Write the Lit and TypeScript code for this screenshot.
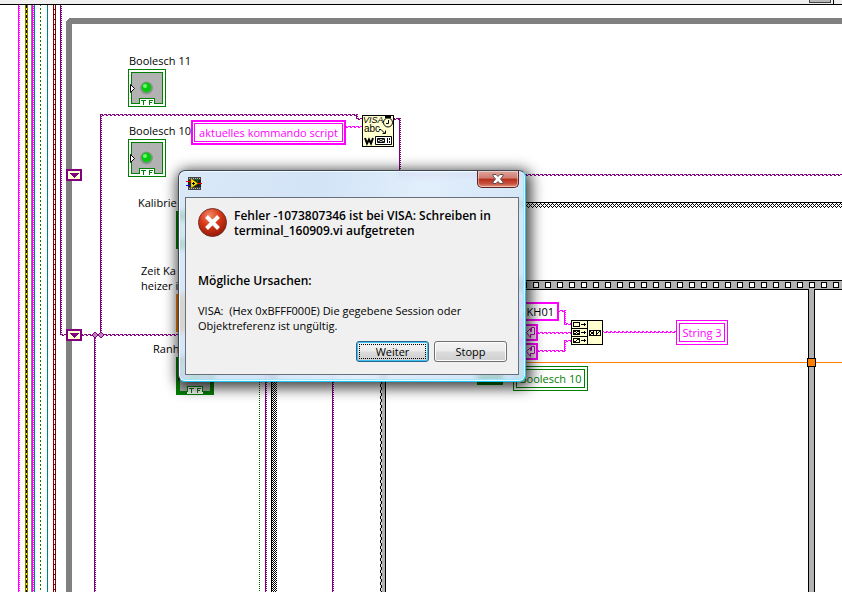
import { LitElement, html, css, svg, nothing } from "lit";
import { customElement, property } from "lit/decorators.js";

type Wire = [number | string, number | string, number | string, number | string];

/** Boolean indicator terminal with its LED and TF tag. */
@customElement("bool-terminal")
class BoolTerminal extends LitElement {
  @property({ type: Boolean }) control = false;
  static styles = css`
    :host { display: block; width: 38px; height: 38px; }
    svg { display: block; }
  `;
  render() {
    const edge = this.control ? 3 : 1;
    return html`<svg width="38" height="38" viewBox="0 0 38 38" shape-rendering="crispEdges" aria-hidden="true">
      <rect x=${edge / 2} y=${edge / 2} width=${38 - edge} height=${38 - edge} fill="#fff" stroke="#008000" stroke-width=${edge} />
      <path d="M3.5 3.5H34.5V34.5H3.5Z" fill="#b2b2b2" stroke="#008000" />
      <rect x="11" y="29" width="16" height="8" fill="#fff" />
      <path d="M11.500 35V29.500H26.500V35" fill="none" stroke="#008000" />
      <path d="M13 31.500H18M15.500 31V36M21.500 36V31.500H25M21 33.500H24" stroke="#008000" fill="none" />
      <path d="M2.500 15.500V23.500L6.500 19.500Z" fill="#fff" stroke="#000" shape-rendering="auto" />
      <g shape-rendering="auto">
        <circle cx="18.500" cy="19" r="6.500" fill="#929292" />
        <circle cx="18.500" cy="18.500" r="5" fill="#08c814" />
        <circle cx="17" cy="17" r="2" fill="#70f86c" />
      </g>
    </svg>`;
  }
}

/** Wiring and structure frames that lie behind the nodes. */
@customElement("wire-layer")
class WireLayer extends LitElement {
  static styles = css`
    :host { display: block; height: 100%; }
    svg { display: block; width: 100%; height: 100%; }
  `;

  private wavy(id: string, color: string) {
    return svg`
      <pattern id="${id}-h" width="4" height="2" patternUnits="userSpaceOnUse">
        <path d="M0 0H3V1H4V2H2V1H0Z" fill=${color} />
      </pattern>
      <pattern id="${id}-v" width="2" height="2" patternUnits="userSpaceOnUse">
        <path d="M0 0H2V1H1V2H0Z" fill=${color} />
      </pattern>
      <pattern id="${id}-o" x="1" width="2" height="2" patternUnits="userSpaceOnUse">
        <path d="M0 0H2V1H1V2H0Z" fill=${color} />
      </pattern>`;
  }

  private fill([x, y, w, h]: Wire, fill: string) {
    return svg`<rect x=${x} y=${y} width=${w} height=${h} fill=${fill} />`;
  }

  render() {
    const full = "100%";
    const purple: [Wire, string][] = [
      [[60, 5, 2, 330], "v"], [[60, 334, 6, 2], "h"],
      [[100, 114, 257, 2], "h"], [[100, 114, 2, 222], "v"],
      [[356, 114, 2, 5], "v"], [[356, 118, 6, 2], "h"],
      [[394, 118, 6, 2], "h"], [[399, 118, 2, 56], "o"],
      [[399, 174, full, 2], "h"], [[82, 334, 100, 2], "h"],
      [[94, 335, 2, full], "v"], [[265, 340, 2, full], "o"], [[332, 340, 2, full], "v"],
    ];
    const pink: [Wire, string][] = [
      [[18, 5, 2, full], "v"], [[32, 5, 2, full], "v"],
      [[346, 126, 16, 2], "h"],
      [[559, 310, 6, 2], "h"], [[564, 310, 2, 14], "v"], [[564, 323, 7, 2], "h"],
      [[538, 332, 33, 2], "h"],
      [[538, 350, 28, 2], "h"], [[564, 340, 2, 12], "v"], [[564, 340, 7, 2], "h"],
      [[603, 331, 73, 2], "h"],
    ];
    return html`<svg shape-rendering="crispEdges" aria-hidden="true">
      <defs>
        ${this.wavy("purple", "#800080")} ${this.wavy("pink", "#f0f")}
        <pattern id="check" width="2" height="2" patternUnits="userSpaceOnUse">
          <rect width="2" height="2" fill="#fff" />
          <path d="M0 0H1V1H0ZM1 1H2V2H1Z" fill="#000" />
        </pattern>
        <pattern id="hatch" width="4" height="4" y="203" patternUnits="userSpaceOnUse">
          <rect width="4" height="4" fill="#fff" />
          <path d="M0 0H1V1H0ZM1 1H2V2H1ZM3 1H4V2H3ZM2 2H3V3H2ZM1 3H2V4H1ZM3 3H4V4H3Z" fill="#000" />
        </pattern>
        <pattern id="dot-green" width="2" height="4" patternUnits="userSpaceOnUse"><rect width="2" height="2" fill="#008000" /></pattern>
        <pattern id="dot-fine" width="2" height="2" patternUnits="userSpaceOnUse"><rect width="2" height="1" fill="#006000" /></pattern>
        <pattern id="dash-yellow" width="1" height="5" patternUnits="userSpaceOnUse"><rect width="1" height="3" fill="#000" /><rect y="3" width="1" height="2" fill="#ff0" /></pattern>
        <pattern id="dash-red" width="1" height="5" patternUnits="userSpaceOnUse"><rect width="1" height="4" fill="#fff" /><rect y="4" width="1" height="1" fill="#800000" /></pattern>
        <pattern id="dash-edge" width="2" height="6" patternUnits="userSpaceOnUse"><rect width="2" height="6" fill="#ddd" /><path d="M0 0H1V3H0ZM1 3H2V6H1Z" fill="#000" /></pattern>
        <pattern id="holes" x="533" y="280" width="12" height="10" patternUnits="userSpaceOnUse">
          <rect width="12" height="10" fill="#b2b2b2" />
          <rect width="12" height="1" fill="#000" /><rect y="9" width="12" height="1" fill="#000" />
          <rect x="0.500" y="2.500" width="5" height="5" fill="#fff" stroke="#000" />
        </pattern>
      </defs>
      <!-- loop frame -->
      <path d="M72 592V24H2000V18H70L68 19L66 22V4000H72Z" fill="#808080" />
      <!-- bus on the left -->
      ${this.fill([25, 5, 1, full], "#807c00")}
      ${this.fill([26, 5, 1, full], "url(#dash-yellow)")} ${this.fill([27, 5, 1, full], "#807c00")}
      ${this.fill([31, 5, 1, full], "#808080")} ${this.fill([34, 5, 1, full], "#008080")}
      ${this.fill([40, 5, 1, full], "url(#dot-green)")} ${this.fill([47, 5, 1, full], "#008080")}
      ${this.fill([53, 5, 3, full], "#800000")} ${this.fill([54, 5, 1, full], "url(#dash-red)")}
      <!-- case and sequence frames -->
      ${this.fill([271, 203, full, 5], "url(#hatch)")} ${this.fill([271, 202, full, 1], "#000")}
      ${this.fill([271, 202, 6, full], "url(#check)")} ${this.fill([271, 202, 1, full], "#000")}
      ${this.fill([380, 280, 6, full], "#b2b2b2")} ${this.fill([380, 280, 2, full], "url(#dash-edge)")}
      ${this.fill([385, 280, 1, full], "#000")}
      ${this.fill([808, 285, 7, full], "#000")} ${this.fill([809, 285, 5, full], "#b2b2b2")}
      ${this.fill([380, 280, full, 10], "url(#holes)")} ${this.fill([809, 288, 5, 2], "#b2b2b2")}
      ${this.fill([259, 360, 1, full], "url(#dot-fine)")}
      ${this.fill([200, 362, full, 1], "#ff8000")}
      <rect x="807.500" y="358.500" width="8" height="8" fill="#ff8000" stroke="#000" />
      ${purple.map(([w, o]) => this.fill(w, `url(#purple-${o})`))}
      ${pink.map(([w, o]) => this.fill(w, `url(#pink-${o})`))}
      <path d="M95 332L98 335L95 338L92 335ZM101 332L104 335L101 338L98 335Z" fill="#c080c0" stroke="#800080" shape-rendering="auto" />
      <!-- terminals mostly behind the dialog -->
      <rect x="176" y="211" width="38" height="38" fill="#008000" />
      <rect x="179" y="220" width="30" height="20" fill="#dfe" />
      <rect x="176" y="294" width="38" height="38" fill="#ff8000" />
      <rect x="477" y="366" width="26" height="19" fill="#008000" />
      <!-- shift registers -->
      ${[169, 329].map((y) => svg`<g transform="translate(66 ${y})">
        <rect width="16" height="12" fill="#800080" /><rect x="2" y="2" width="12" height="8" fill="#ffffd0" />
        <path d="M3 4H13L8 9Z" fill="#800080" /></g>`)}
    </svg>`;
  }
}

@customElement("error-dialog")
class ErrorDialog extends LitElement {
  static styles = css`
    :host {
      display: block; box-sizing: border-box; width: 348px; padding: 0 6px 6px;
      border: 1px solid #3c4654; border-right-color: #18c8f4; border-bottom-color: #18c8f4;
      border-radius: 7px;
      background: linear-gradient(110deg, #d4e4f5d8, #cbdff6d8 35%, #dcebfad8 60%, #c4dcf4d8);
      backdrop-filter: blur(3px);
      box-shadow: inset 0 0 0 1px #effaff, inset -1px -1px 0 1px #9fe6fb, 2px 3px 14px 3px #000000c0;
      font: 11px/15px "Open Sans", "Noto Sans", sans-serif; color: #000;
    }
    .bar { display: flex; justify-content: space-between; height: 26px; }
    .icon { margin: 4px 0 0 1px; }
    .close {
      width: 42px; height: 17px; padding: 0; display: grid; place-items: center;
      border: 1px solid #5c2524; border-top: 0; border-radius: 0 0 5px 5px;
      background: linear-gradient(#dfa69c, #cf7b6e 45%, #b52c1b 50%, #c9513e 80%, #e39a84);
      box-shadow: inset 0 0 0 1px #ffffff70;
    }
    .body {
      box-sizing: border-box; height: 178px; padding: 10px 11px 12px 12px;
      border: 1px solid #68707c; background: #f0f0f0;
      display: flex; flex-direction: column;
    }
    .head { display: flex; gap: 6px; }
    h1, h2 { margin: 0; font-size: 12px; font-weight: 600; line-height: 15px; }
    h2 { margin-top: 35px; }
    p { margin: 15px 0 0; }
    .actions { display: flex; justify-content: flex-end; gap: 5px; margin-top: auto; }
    .btn {
      width: 73px; height: 21px; padding: 0; font: inherit; color: #000;
      border: 1px solid #707070; border-radius: 3px;
      background: linear-gradient(#f3f3f3, #ebebeb 48%, #dcdcdc 52%, #cfcfcf);
      box-shadow: inset 0 0 0 1px #fcfcfc;
    }
    .main {
      border-color: #2c628b; box-shadow: inset 0 0 0 1px #3cc4f0;
      outline: 1px dotted #000; outline-offset: -4px;
    }
  `;
  render() {
    return html`
      <div class="bar">
        <svg class="icon" width="16" height="16" viewBox="0 0 16 16" aria-hidden="true">
          <path d="M2 2H15V15H2Z" fill="#444" />
          <path d="M3 3.500H15M3 13.500H15" stroke="#bbb" stroke-dasharray="1 1" />
          <path d="M2 5H15V12H2Z" fill="#1b241b" />
          <path d="M5 3.500L12 8.500L5 13Z" fill="#ffe600" stroke="#807000" stroke-width=".5" />
          <path d="M8 4L12 7V4Z" fill="#17651b" />
          <path d="M6 8.500H9M7.500 7V10" stroke="#000" />
          <path d="M0 6.500H5M12 8.500H16" stroke="#f00" />
          <path d="M0 10.500H5" stroke="#00f" />
        </svg>
        <button class="close" aria-label="Schließen">
          <svg width="12" height="10" viewBox="0 0 12 10" aria-hidden="true">
            <path d="M1 .5H4L6 2.500L8 .5H11V2L8.500 5L11 8V9.500H8L6 7.500L4 9.500H1V8L3.500 5L1 2Z" fill="#fff" stroke="#5c4b50" />
          </svg>
        </button>
      </div>
      <div class="body">
        <div class="head">
          <svg width="30" height="30" viewBox="0 0 30 30" aria-hidden="true">
            <defs><radialGradient id="r" cx=".4" cy=".25" r=".8">
              <stop offset="0" stop-color="#f08a68" /><stop offset=".45" stop-color="#d83a18" /><stop offset="1" stop-color="#8e1606" />
            </radialGradient></defs>
            <circle cx="14.500" cy="14.500" r="14" fill="url(#r)" stroke="#75312a" />
            <path d="M8.500 8.500L20.500 20.500M20.500 8.500L8.500 20.500" stroke="#fff" stroke-width="4" />
          </svg>
          <h1>Fehler -1073807346 ist bei VISA: Schreiben in<br />terminal_160909.vi aufgetreten</h1>
        </div>
        <h2>Mögliche Ursachen:</h2>
        <p>VISA:&nbsp; (Hex 0xBFFF000E) Die gegebene Session oder<br />Objektreferenz ist ungültig.</p>
        <div class="actions">
          <button class="btn main">Weiter</button>
          <button class="btn">Stopp</button>
        </div>
      </div>`;
  }
}

@customElement("app-root")
class AppRoot extends LitElement {
  static styles = css`
    :host {
      display: flex; flex-direction: column; height: 100vh; overflow: hidden; background: #fff;
      font: 11px/15px "Open Sans", "Noto Sans", sans-serif; color: #000;
    }
    .toolbar {
      position: relative; z-index: 1; box-sizing: border-box; flex: none; height: 5px;
      display: flex; justify-content: flex-end; align-items: flex-start; gap: 2px;
      background: #f0f0f0; border-bottom: 1px solid #000;
    }
    .thumb { box-sizing: border-box; width: 22px; height: 3px; background: #b8b8b8; border: 1px solid #444; border-top: 0; }
    .sep { width: 1px; height: 4px; margin-right: 8px; background: #000; }
    .canvas { position: relative; flex: 1; min-height: 0; margin-top: -5px; overflow: hidden; }
    .at { position: absolute; white-space: pre; }
    .box { box-sizing: border-box; height: 25px; text-align: center; background: #fff; border: 1px solid; padding: 2px; }
    .box span { display: block; box-sizing: border-box; border: 1px solid; line-height: 17px; height: 19px; }
    .pink { color: #f0f; }
    .green { color: #008000; }
    .plain { box-sizing: border-box; height: 19px; line-height: 15px; border: 2px solid #f0f; background: #fff; text-align: right; padding-right: 3px; }
    .eol { box-sizing: border-box; width: 24px; height: 17px; border: 2px solid #f0f; background: #f2e4ee; }
    .n1 { left: 129px; top: 53px; } .t1 { left: 128px; top: 69px; }
    .n2 { left: 129px; top: 123px; } .t2 { left: 128px; top: 139px; }
    .n3 { left: 138px; top: 195px; }
    .n4 { left: 141px; top: 263px; }
    .n5 { left: 153px; top: 341px; } .t5 { left: 176px; top: 357px; }
    .cmd { left: 191px; top: 120px; width: 155px; border-width: 2px; padding: 1px; }
    .visa { left: 362px; top: 115px; }
    .kh { left: 514px; top: 302px; width: 45px; }
    .e1 { left: 514px; top: 324px; } .e2 { left: 514px; top: 343px; }
    .join { left: 571px; top: 320px; }
    .str { left: 676px; top: 320px; width: 52px; }
    .loc { left: 513px; top: 366px; width: 75px; }
    .dlg { left: 178px; top: 170px; white-space: normal; }
    svg { display: block; }
    .vt { font: italic 9px "Liberation Sans", Arial, sans-serif; }
    .va { font: 10px "Liberation Sans", Arial, sans-serif; }
  `;

  private eol(place: string) {
    return html`<div class="at eol ${place}"><svg width="20" height="13" viewBox="0 0 20 13" aria-hidden="true">
      <path d="M15.500 1.500H18.500V8.500H14.500V11.500L10.500 6.500L14.500 2.500V5.500H15.500Z" fill="#fff" stroke="#d000d0" />
    </svg></div>`;
  }

  render() {
    return html`
      <header class="toolbar"><div class="thumb"></div><div class="sep"></div></header>
      <main class="canvas">
        <wire-layer></wire-layer>
        <div class="at n1">Boolesch 11</div>
        <bool-terminal class="at t1"></bool-terminal>
        <div class="at n2">Boolesch 10</div>
        <bool-terminal class="at t2"></bool-terminal>
        <div class="at n3">Kalibrie</div>
        <div class="at n4">Zeit Ka<br />heizer i</div>
        <div class="at n5">Ranh</div>
        <bool-terminal class="at t5" control></bool-terminal>
        <div class="at box pink cmd"><span>aktuelles kommando script</span></div>
        <svg class="at visa" width="32" height="32" viewBox="0 0 32 32" aria-hidden="true">
          <rect x=".5" y=".5" width="31" height="31" fill="#ffffd0" stroke="#000" />
          <text class="vt" x="1" y="8">VISA</text>
          <text class="va" x="2" y="17">abc</text>
          <circle cx="26" cy="7.500" r="4.500" fill="#ffffd0" stroke="#000" />
          <path d="M23 1H29V3H23ZM30 3L31 5" fill="#000" />
          <path d="M26.500 5V8.500H24M17 14.500H19L22.500 18M23.500 15.500V18.500H20.500" fill="none" stroke="#000" />
          <path d="M3 23L5 28.500L7 24.500L9 28.500L11 23" fill="none" stroke="#000" stroke-width="2" />
          <path d="M13.500 21.500H29.500V29.500H13.500Z" fill="#fff" stroke="#000" />
          <path d="M15.500 23.500H22.500V27.500H15.500ZM16 24L22 27M22 24L16 27M25.500 23V28" fill="none" stroke="#000" />
          <path d="M27 23H28V25H27ZM27 26H28V28H27Z" />
        </svg>
        <div class="at plain kh">KH01</div>
        ${this.eol("e1")} ${this.eol("e2")}
        <svg class="at join" width="32" height="25" viewBox="0 0 32 25" shape-rendering="crispEdges" aria-hidden="true">
          <rect x=".5" y=".5" width="31" height="24" fill="#ffffd0" stroke="#000" />
          <path d="M16.500 0V25M1 8.500H16M1 16.500H16M2.500 2.500H8.500V6.500H2.500ZM2.500 10.500H8.500V14.500H2.500ZM2.500 18.500H8.500V22.500H2.500ZM10 4.500H15M10 12.500H15M10 20.500H15M13.500 3V6M13.500 11V14M13.500 19V22M18.500 10.500H29.500V15.500H18.500ZM3 11L8 14M8 11L3 14M3 22L8 19M22.500 11V15M25.500 11V15M19 11L23 15M23 11L19 15M25 15L29 11" fill="none" stroke="#000" />
        </svg>
        <div class="at box pink str"><span>String 3</span></div>
        <div class="at box green loc"><span>Boolesch 10</span></div>
        <error-dialog class="at dlg" role="dialog" aria-label="Fehler"></error-dialog>
      </main>`;
  }
}
